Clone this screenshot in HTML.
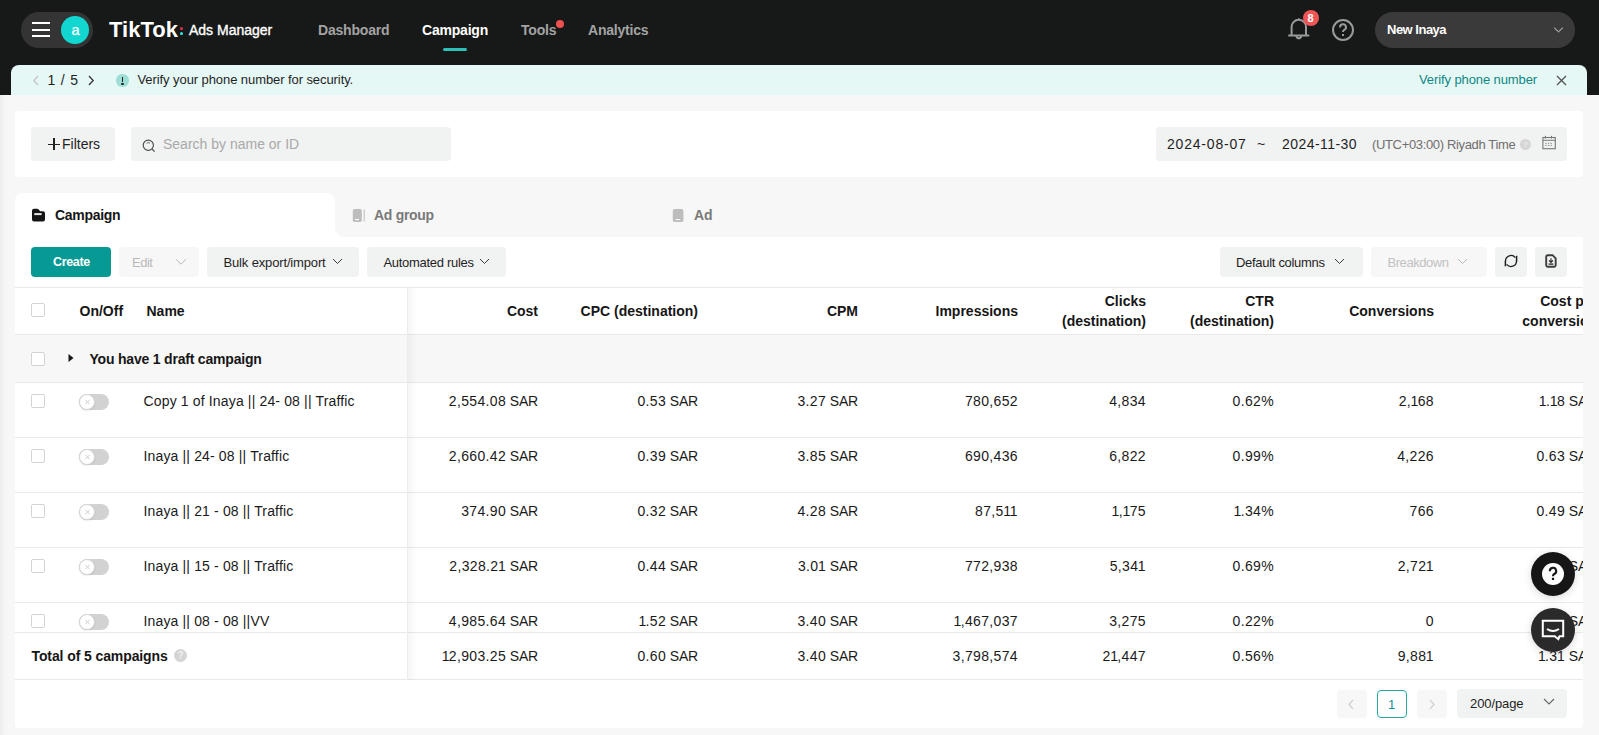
<!DOCTYPE html>
<html><head><meta charset="utf-8">
<style>
*{box-sizing:border-box;margin:0;padding:0}
html,body{width:1599px;height:735px;overflow:hidden}
body{position:relative;background:#f7f7f7;font-family:"Liberation Sans",sans-serif;color:#1f1f1f}
.a{position:absolute}
.t{position:absolute;white-space:nowrap;line-height:14px;font-size:14px}
.t13{font-size:13px;line-height:13px}
.b{font-weight:700}
.hdr{left:0;top:0;width:1599px;height:95px;background:#171918}
.navi{color:#a3a3a3;font-weight:700;letter-spacing:-0.2px}
.btn{position:absolute;background:#f1f2f2;border-radius:4px;height:30px;top:247px}
.hl{position:absolute;left:15px;width:1568px;height:1px;background:#e9e9e9}
.cb{position:absolute;left:31px;width:14px;height:14px;border:1px solid #d4d4d4;border-radius:2px;background:#fff}
.tg{position:absolute;left:79px;width:30px;height:16px;border-radius:8px;background:#d2d2d2}
.tg i{position:absolute;left:0;top:0;width:16px;height:16px;border-radius:50%;background:#fff;box-shadow:0 1px 2px rgba(0,0,0,.08);border:1px solid #d6d6d6}
.tg i:before,.tg i:after{content:"";position:absolute;left:6.5px;top:4px;width:1px;height:6px;background:#dcdcdc;transform:rotate(45deg)}
.tg i:after{transform:rotate(-45deg)}
.r{text-align:right}
i{font-style:normal}
.nm{letter-spacing:0.35px}
.sar{letter-spacing:-0.2px}
.n1{margin-left:-0.5px;letter-spacing:-0.6px}
.n1e{margin-left:-0.5px}
</style></head><body>

<!-- HEADER -->
<div class="a hdr"></div>
<div class="a" style="left:21px;top:12px;width:72px;height:36px;border-radius:18px;background:#343434"></div>
<div class="a" style="left:32px;top:22px;width:18px;height:2px;background:#fff"></div>
<div class="a" style="left:32px;top:29px;width:18px;height:2px;background:#fff"></div>
<div class="a" style="left:32px;top:35px;width:18px;height:2px;background:#fff"></div>
<div class="a" style="left:61px;top:16px;width:28px;height:28px;border-radius:50%;background:#12d6d0"></div>
<div class="t" style="left:71.5px;top:23px;color:#fff;font-size:14.5px;line-height:14.5px;-webkit-text-stroke:0.25px #fff">a</div>

<div class="t b" style="left:109px;top:19px;font-size:22px;line-height:22px;color:#fff">TikTok</div>
<div class="a" style="left:180px;top:27px;width:3.4px;height:3.4px;border-radius:50%;background:#f02c55"></div>
<div class="a" style="left:180px;top:32px;width:3.4px;height:3.4px;border-radius:50%;background:#25efe9"></div>
<div class="t" style="left:189px;top:23px;color:#fff;-webkit-text-stroke:0.35px #fff">Ads Manager</div>

<div class="t navi" style="left:318px;top:22.5px">Dashboard</div>
<div class="t navi" style="left:422px;top:22.5px;color:#fff">Campaign</div>
<div class="a" style="left:443px;top:48px;width:24px;height:3px;border-radius:2px;background:#2dc2b9"></div>
<div class="t navi" style="left:521px;top:22.5px">Tools</div>
<div class="a" style="left:556px;top:20px;width:8px;height:8px;border-radius:50%;background:#ee5050"></div>
<div class="t navi" style="left:588px;top:22.5px">Analytics</div>

<!-- bell -->
<svg class="a" style="left:1286px;top:16px" width="26" height="28" viewBox="0 0 26 28">
 <path d="M5.6 19 V11 A7.2 7.2 0 0 1 20 11 V19" fill="none" stroke="#9a9a9a" stroke-width="2"/>
 <line x1="3" y1="19.5" x2="22.5" y2="19.5" stroke="#9a9a9a" stroke-width="2" stroke-linecap="round"/>
 <path d="M10.3 20 A2.6 3.2 0 0 0 15.3 20" fill="none" stroke="#9a9a9a" stroke-width="2"/>
 <circle cx="12.8" cy="3.3" r="1" fill="#9a9a9a"/>
</svg>
<div class="a" style="left:1303px;top:10px;width:16px;height:16px;border-radius:50%;background:#ee5656"></div>
<div class="t b" style="left:1307.5px;top:11.5px;font-size:11px;line-height:13px;color:#fff">8</div>
<!-- help -->
<svg class="a" style="left:1331px;top:18px" width="24" height="24" viewBox="0 0 24 24">
 <circle cx="12" cy="12" r="10" fill="none" stroke="#9a9a9a" stroke-width="2"/>
 <path d="M9 9.5 A3 3 0 1 1 13 12 Q12 12.6 12 14" fill="none" stroke="#9a9a9a" stroke-width="2"/>
 <rect x="11" y="16" width="2" height="2" fill="#9a9a9a"/>
</svg>
<div class="a" style="left:1375px;top:12px;width:200px;height:36px;border-radius:18px;background:#3a3a3a"></div>
<div class="t t13 b" style="left:1387px;top:22.5px;color:#fff;letter-spacing:-0.5px">New Inaya</div>
<svg class="a" style="left:1553px;top:26px" width="11" height="8" viewBox="0 0 11 8"><path d="M1.2 1.8 L5.5 5.8 L9.8 1.8" fill="none" stroke="#eee" stroke-width="0.9"/></svg>

<!-- BANNER -->
<div class="a" style="left:11px;top:65px;width:1576px;height:30px;border-radius:8px 8px 0 0;background:#e6f8f6"></div>


<svg class="a" style="left:32px;top:75px" width="8" height="11" viewBox="0 0 8 11"><path d="M6 1 L1.8 5.5 L6 10" fill="none" stroke="#c4c4c4" stroke-width="1.3"/></svg>
<div class="t" style="left:47.5px;top:73px;color:#1f1f1f;letter-spacing:0.8px">1 / 5</div>
<svg class="a" style="left:87px;top:75px" width="8" height="11" viewBox="0 0 8 11"><path d="M2 1 L6.2 5.5 L2 10" fill="none" stroke="#333" stroke-width="1.3"/></svg>
<div class="a" style="left:116px;top:74px;width:12.5px;height:12.5px;border-radius:50%;background:#9fded7"></div>
<div class="a" style="left:121.5px;top:76.5px;width:1.6px;height:5.5px;background:#222"></div>
<div class="a" style="left:121px;top:82.5px;width:2.5px;height:2px;border-radius:1px;background:#222"></div>
<div class="t t13" style="left:137.5px;top:73px;color:#1f1f1f;letter-spacing:-0.08px">Verify your phone number for security.</div>
<div class="t t13" style="left:1419px;top:73px;color:#0e8785;letter-spacing:-0.1px">Verify phone number</div>
<svg class="a" style="left:1556px;top:74.5px" width="11" height="11" viewBox="0 0 11 11"><path d="M1 1 L10 10 M10 1 L1 10" stroke="#555" stroke-width="1.4"/></svg>

<div class="a" style="left:0;top:95px;width:6px;height:640px;background:linear-gradient(to right,#ededed,#f7f7f7)"></div>
<!-- FILTER CARD -->
<div class="a" style="left:15px;top:111px;width:1568px;height:66px;border-radius:4px;background:#fff"></div>
<div class="a" style="left:31px;top:127px;width:84px;height:34px;border-radius:4px;background:#f1f2f2"></div>
<div class="a" style="left:48px;top:143.5px;width:12px;height:1.2px;background:#222"></div>
<div class="a" style="left:53.4px;top:138px;width:1.2px;height:12px;background:#222"></div>
<div class="t" style="left:62px;top:136.5px;color:#1f1f1f">Filters</div>
<div class="a" style="left:131px;top:127px;width:320px;height:34px;border-radius:4px;background:#f1f2f2"></div>
<svg class="a" style="left:141px;top:138px" width="16" height="16" viewBox="0 0 16 16"><circle cx="7.3" cy="7.2" r="5.1" fill="none" stroke="#4a4a4a" stroke-width="1.15"/><path d="M10.9 10.9 L13.6 13.6" stroke="#4a4a4a" stroke-width="1.3"/><path d="M5.6 5.3 A2.4 2.4 0 0 1 9 5.3" fill="none" stroke="#555" stroke-width="0.9"/></svg>
<div class="t" style="left:163px;top:136.7px;color:#a9a9a9">Search by name or ID</div>

<div class="a" style="left:1156px;top:127px;width:411px;height:34px;border-radius:4px;background:#f1f2f2"></div>
<div class="t" style="left:1167px;top:136.6px;color:#1f1f1f;letter-spacing:0.8px">2024-08-07</div>
<div class="t" style="left:1257px;top:136.6px;color:#1f1f1f">~</div>
<div class="t" style="left:1282px;top:136.6px;color:#1f1f1f;letter-spacing:0.45px">2024-11-30</div>
<div class="t t13" style="left:1372px;top:137.5px;color:#6f6f6f;letter-spacing:-0.35px">(UTC+03:00) Riyadh Time</div>
<div class="a" style="left:1520px;top:139px;width:11px;height:11px;border-radius:50%;background:#d6d6d6"></div>
<div class="t b" style="left:1523px;top:140px;font-size:8px;line-height:9px;color:#eee">?</div>
<svg class="a" style="left:1541px;top:135px" width="15" height="15" viewBox="0 0 15 15"><rect x="1.9" y="2.5" width="12.4" height="11.2" fill="none" stroke="#777" stroke-width="1.1"/><line x1="1.9" y1="5.3" x2="14.3" y2="5.3" stroke="#777" stroke-width="1"/><line x1="4.4" y1="0.9" x2="4.4" y2="3.6" stroke="#777" stroke-width="1"/><line x1="10.5" y1="0.9" x2="10.5" y2="3.6" stroke="#777" stroke-width="1"/><g fill="#888"><rect x="4.2" y="7.8" width="1.4" height="1"/><rect x="6.9" y="7.8" width="1.4" height="1"/><rect x="9.5" y="7.8" width="1.4" height="1"/><rect x="4.2" y="9.9" width="1.4" height="1"/><rect x="6.9" y="9.9" width="1.4" height="1"/><rect x="9.5" y="9.9" width="1.4" height="1"/></g></svg>

<!-- TABS + MAIN CARD -->
<div class="a" style="left:15px;top:193px;width:320px;height:60px;border-radius:8px 8px 0 0;background:#fff"></div>
<div class="a" style="left:15px;top:237px;width:1568px;height:491px;border-radius:0 0 4px 4px;background:#fff"></div>
<div class="a" style="left:330px;top:220px;width:20px;height:20px;background:#fff"></div>
<div class="a" style="left:335px;top:193px;width:1248px;height:44px;background:#f7f7f7;border-bottom-left-radius:9px"></div>
<svg class="a" style="left:31px;top:208px" width="15" height="15" viewBox="0 0 15 15"><path d="M1 2.8 Q1 0.8 3 0.8 H6.2 Q7 0.8 7.6 1.5 L9.2 3.3 H12 Q14 3.3 14 5.3 V11.6 Q14 13.6 12 13.6 H3 Q1 13.6 1 11.6 Z" fill="#161616"/><rect x="3.3" y="5.1" width="7.3" height="2" fill="#e8e8e8"/></svg>
<div class="t b" style="left:55px;top:208px;color:#161616;letter-spacing:-0.3px">Campaign</div>
<svg class="a" style="left:352px;top:208px" width="14" height="15" viewBox="0 0 14 15"><rect x="0.8" y="1" width="9" height="13" rx="1.8" fill="#bdbdbd"/><rect x="3" y="11" width="4" height="1.1" fill="#fff"/><line x1="12.2" y1="1.5" x2="12.2" y2="13.5" stroke="#bdbdbd" stroke-width="1"/></svg>
<div class="t b" style="left:374px;top:208px;color:#7a7a7a;letter-spacing:-0.3px">Ad group</div>
<svg class="a" style="left:672px;top:208px" width="13" height="15" viewBox="0 0 13 15"><rect x="0.8" y="1" width="10.6" height="13" rx="1.8" fill="#bdbdbd"/><rect x="3.8" y="11" width="4.4" height="1.1" fill="#fff"/></svg>
<div class="t b" style="left:694px;top:208px;color:#7a7a7a">Ad</div>

<!-- TOOLBAR -->
<div class="btn" style="left:31px;width:80px;background:#079a94"></div>
<div class="t b" style="left:53px;top:255.5px;font-size:12.5px;line-height:12.5px;color:#fff;letter-spacing:-0.35px">Create</div>
<div class="btn" style="left:119px;width:80px;background:#f7f7f7"></div>
<div class="t t13" style="left:132px;top:255.5px;color:#b9b9b9;letter-spacing:-0.5px">Edit</div>
<svg class="a" style="left:175px;top:258px" width="12" height="8" viewBox="0 0 12 8"><path d="M1 1.2 L6 6.2 L11 1.2" fill="none" stroke="#b8b8b8" stroke-width="1"/></svg>
<div class="btn" style="left:207px;width:152px"></div>
<div class="t t13" style="left:223.5px;top:255.5px;color:#1f1f1f;letter-spacing:-0.15px">Bulk export/import</div>
<svg class="a" style="left:332px;top:258px" width="11" height="7" viewBox="0 0 11 7"><path d="M1 1 L5.5 5.5 L10 1" fill="none" stroke="#3a3a3a" stroke-width="1"/></svg>
<div class="btn" style="left:367px;width:139px"></div>
<div class="t t13" style="left:383.5px;top:255.5px;color:#1f1f1f;letter-spacing:-0.3px">Automated rules</div>
<svg class="a" style="left:479px;top:258px" width="11" height="7" viewBox="0 0 11 7"><path d="M1 1 L5.5 5.5 L10 1" fill="none" stroke="#3a3a3a" stroke-width="1"/></svg>

<div class="btn" style="left:1220px;width:143px"></div>
<div class="t t13" style="left:1236px;top:255.5px;color:#1f1f1f;letter-spacing:-0.3px">Default columns</div>
<svg class="a" style="left:1334px;top:258px" width="11" height="7" viewBox="0 0 11 7"><path d="M1 1 L5.5 5.5 L10 1" fill="none" stroke="#3a3a3a" stroke-width="1"/></svg>
<div class="btn" style="left:1371px;width:116px;background:#f7f7f7"></div>
<div class="t t13" style="left:1387.5px;top:255.5px;color:#c2c2c2;letter-spacing:-0.45px">Breakdown</div>
<svg class="a" style="left:1457px;top:258px" width="11" height="7" viewBox="0 0 11 7"><path d="M1 1 L5.5 5.5 L10 1" fill="none" stroke="#b8b8b8" stroke-width="1"/></svg>
<div class="btn" style="left:1495px;width:32px"></div>
<svg class="a" style="left:1504px;top:254px" width="14" height="14" viewBox="0 0 14 14"><path d="M1.50 7.00 A5.5 5.5 0 0 1 11.33 3.61" fill="none" stroke="#1f1f1f" stroke-width="1.3"/><path d="M12.50 7.00 A5.5 5.5 0 0 1 2.67 10.39" fill="none" stroke="#1f1f1f" stroke-width="1.3"/><path d="M12.6 1.8 V7.6" stroke="#1f1f1f" stroke-width="1.5"/><path d="M1.4 6.8 V12.3" stroke="#1f1f1f" stroke-width="1.5"/></svg>
<div class="btn" style="left:1535px;width:32px"></div>
<svg class="a" style="left:1544px;top:253px" width="14" height="16" viewBox="0 0 14 16"><path d="M2.2 3.7 Q2.2 2.2 3.7 2.2 H8.6 L11.7 5.3 V12.2 Q11.7 13.7 10.2 13.7 H3.7 Q2.2 13.7 2.2 12.2 Z" fill="none" stroke="#3d3d3d" stroke-width="1.9"/><path d="M7 5.2 V9" stroke="#222" stroke-width="1.1"/><path d="M5 7.4 L7 9.3 L9 7.4" fill="none" stroke="#222" stroke-width="1.2"/><path d="M4.6 11.1 H9.4" stroke="#222" stroke-width="1.3"/></svg>

<div class="hl" style="top:287px"></div>


<!-- TABLE -->
<div class="a" style="left:15px;top:288px;width:1568px;height:392px;overflow:hidden">
<div class="a" style="left:-15px;top:-288px;width:1599px;height:735px">
<div class="a" style="left:15px;top:335px;width:1568px;height:47px;background:#f7f7f7"></div>
<div class="hl" style="top:334px"></div>
<div class="hl" style="top:382px"></div>
<div class="hl" style="top:437px"></div>
<div class="hl" style="top:492px"></div>
<div class="hl" style="top:547px"></div>
<div class="hl" style="top:602px"></div>
<div class="cb" style="top:303px"></div>
<div class="t b" style="left:79.5px;top:304px;color:#161616">On/Off</div>
<div class="t b" style="left:146.5px;top:304px;color:#161616">Name</div>
<div class="t r" style="right:1061px;top:304px;font-weight:700;color:#161616;">Cost</div>
<div class="t r" style="right:901px;top:304px;font-weight:700;color:#161616;">CPC (destination)</div>
<div class="t r" style="right:741px;top:304px;font-weight:700;color:#161616;">CPM</div>
<div class="t r" style="right:581px;top:304px;font-weight:700;color:#161616;">Impressions</div>
<div class="t r b" style="right:453px;top:291px;line-height:20px;color:#161616;">Clicks<br>(destination)</div>
<div class="t r b" style="right:325px;top:291px;line-height:20px;color:#161616;">CTR<br>(destination)</div>
<div class="t r" style="right:165px;top:304px;font-weight:700;color:#161616;">Conversions</div>
<div class="t r b" style="right:2px;top:291px;line-height:20px;color:#161616;">Cost per<br>conversion</div>
<div class="cb" style="top:352px"></div>
<svg class="a" style="left:67px;top:353px" width="8" height="10" viewBox="0 0 8 10"><path d="M1.5 1 L6.5 5 L1.5 9 Z" fill="#161616"/></svg>
<div class="t b" style="left:89.5px;top:352px;color:#161616;letter-spacing:-0.2px">You have 1 draft campaign</div>
<div class="cb" style="top:394px"></div>
<div class="tg" style="top:394px"><i></i></div>
<div class="t" style="left:143.5px;top:393.5px;color:#1a1a1a;letter-spacing:0.15px">Copy 1 of Inaya || 24- 08 || Traffic</div>
<div class="t r" style="right:1061px;top:393.5px;color:#1a1a1a;"><span class="nm">2,554.08<i class="sar"> SAR</i></span></div>
<div class="t r" style="right:901px;top:393.5px;color:#1a1a1a;"><span class="nm">0.53<i class="sar"> SAR</i></span></div>
<div class="t r" style="right:741px;top:393.5px;color:#1a1a1a;"><span class="nm">3.27<i class="sar"> SAR</i></span></div>
<div class="t r" style="right:581px;top:393.5px;color:#1a1a1a;"><span class="nm">780,652</span></div>
<div class="t r" style="right:453px;top:393.5px;color:#1a1a1a;"><span class="nm">4,834</span></div>
<div class="t r" style="right:325px;top:393.5px;color:#1a1a1a;"><span class="nm">0.62%</span></div>
<div class="t r" style="right:165px;top:393.5px;color:#1a1a1a;"><span class="nm">2,<i class="n1">1</i>68</span></div>
<div class="t r" style="right:2px;top:393.5px;color:#1a1a1a;"><span class="nm"><i class="n1">1</i>.<i class="n1">1</i>8<i class="sar"> SAR</i></span></div>
<div class="cb" style="top:449px"></div>
<div class="tg" style="top:449px"><i></i></div>
<div class="t" style="left:143.5px;top:448.5px;color:#1a1a1a;letter-spacing:0.15px">Inaya || 24- 08 || Traffic</div>
<div class="t r" style="right:1061px;top:448.5px;color:#1a1a1a;"><span class="nm">2,660.42<i class="sar"> SAR</i></span></div>
<div class="t r" style="right:901px;top:448.5px;color:#1a1a1a;"><span class="nm">0.39<i class="sar"> SAR</i></span></div>
<div class="t r" style="right:741px;top:448.5px;color:#1a1a1a;"><span class="nm">3.85<i class="sar"> SAR</i></span></div>
<div class="t r" style="right:581px;top:448.5px;color:#1a1a1a;"><span class="nm">690,436</span></div>
<div class="t r" style="right:453px;top:448.5px;color:#1a1a1a;"><span class="nm">6,822</span></div>
<div class="t r" style="right:325px;top:448.5px;color:#1a1a1a;"><span class="nm">0.99%</span></div>
<div class="t r" style="right:165px;top:448.5px;color:#1a1a1a;"><span class="nm">4,226</span></div>
<div class="t r" style="right:2px;top:448.5px;color:#1a1a1a;"><span class="nm">0.63<i class="sar"> SAR</i></span></div>
<div class="cb" style="top:504px"></div>
<div class="tg" style="top:504px"><i></i></div>
<div class="t" style="left:143.5px;top:503.5px;color:#1a1a1a;letter-spacing:0.15px">Inaya || 21 - 08 || Traffic</div>
<div class="t r" style="right:1061px;top:503.5px;color:#1a1a1a;"><span class="nm">374.90<i class="sar"> SAR</i></span></div>
<div class="t r" style="right:901px;top:503.5px;color:#1a1a1a;"><span class="nm">0.32<i class="sar"> SAR</i></span></div>
<div class="t r" style="right:741px;top:503.5px;color:#1a1a1a;"><span class="nm">4.28<i class="sar"> SAR</i></span></div>
<div class="t r" style="right:581px;top:503.5px;color:#1a1a1a;"><span class="nm">87,5<i class="n1">1</i><i class="n1e">1</i></span></div>
<div class="t r" style="right:453px;top:503.5px;color:#1a1a1a;"><span class="nm"><i class="n1">1</i>,<i class="n1">1</i>75</span></div>
<div class="t r" style="right:325px;top:503.5px;color:#1a1a1a;"><span class="nm"><i class="n1">1</i>.34%</span></div>
<div class="t r" style="right:165px;top:503.5px;color:#1a1a1a;"><span class="nm">766</span></div>
<div class="t r" style="right:2px;top:503.5px;color:#1a1a1a;"><span class="nm">0.49<i class="sar"> SAR</i></span></div>
<div class="cb" style="top:559px"></div>
<div class="tg" style="top:559px"><i></i></div>
<div class="t" style="left:143.5px;top:558.5px;color:#1a1a1a;letter-spacing:0.15px">Inaya || 15 - 08 || Traffic</div>
<div class="t r" style="right:1061px;top:558.5px;color:#1a1a1a;"><span class="nm">2,328.2<i class="n1e">1</i><i class="sar"> SAR</i></span></div>
<div class="t r" style="right:901px;top:558.5px;color:#1a1a1a;"><span class="nm">0.44<i class="sar"> SAR</i></span></div>
<div class="t r" style="right:741px;top:558.5px;color:#1a1a1a;"><span class="nm">3.0<i class="n1e">1</i><i class="sar"> SAR</i></span></div>
<div class="t r" style="right:581px;top:558.5px;color:#1a1a1a;"><span class="nm">772,938</span></div>
<div class="t r" style="right:453px;top:558.5px;color:#1a1a1a;"><span class="nm">5,34<i class="n1e">1</i></span></div>
<div class="t r" style="right:325px;top:558.5px;color:#1a1a1a;"><span class="nm">0.69%</span></div>
<div class="t r" style="right:165px;top:558.5px;color:#1a1a1a;"><span class="nm">2,72<i class="n1e">1</i></span></div>
<div class="t r" style="right:2px;top:558.5px;color:#1a1a1a;"><span class="nm">0.86<i class="sar"> SAR</i></span></div>
<div class="cb" style="top:614px"></div>
<div class="tg" style="top:614px"><i></i></div>
<div class="t" style="left:143.5px;top:613.5px;color:#1a1a1a;letter-spacing:0.15px">Inaya || 08 - 08 ||VV</div>
<div class="t r" style="right:1061px;top:613.5px;color:#1a1a1a;"><span class="nm">4,985.64<i class="sar"> SAR</i></span></div>
<div class="t r" style="right:901px;top:613.5px;color:#1a1a1a;"><span class="nm"><i class="n1">1</i>.52<i class="sar"> SAR</i></span></div>
<div class="t r" style="right:741px;top:613.5px;color:#1a1a1a;"><span class="nm">3.40<i class="sar"> SAR</i></span></div>
<div class="t r" style="right:581px;top:613.5px;color:#1a1a1a;"><span class="nm"><i class="n1">1</i>,467,037</span></div>
<div class="t r" style="right:453px;top:613.5px;color:#1a1a1a;"><span class="nm">3,275</span></div>
<div class="t r" style="right:325px;top:613.5px;color:#1a1a1a;"><span class="nm">0.22%</span></div>
<div class="t r" style="right:165px;top:613.5px;color:#1a1a1a;"><span class="nm">0</span></div>
<div class="t r" style="right:2px;top:613.5px;color:#1a1a1a;"><span class="nm">0.00<i class="sar"> SAR</i></span></div>
<div class="a" style="left:15px;top:632px;width:1568px;height:47px;background:#fff"></div>
<div class="hl" style="top:632px"></div>
<div class="hl" style="top:679px"></div>
<div class="t b" style="left:31.5px;top:649px;color:#161616;letter-spacing:-0.1px">Total of 5 campaigns</div>
<div class="a" style="left:173.5px;top:648.5px;width:13.5px;height:13.5px;border-radius:50%;background:#d4d4d4"></div>
<div class="t b" style="left:177.5px;top:650px;font-size:10px;line-height:11px;color:#eee">?</div>
<div class="t r" style="right:1061px;top:649px;color:#1a1a1a;"><span class="nm"><i class="n1">1</i>2,903.25<i class="sar"> SAR</i></span></div>
<div class="t r" style="right:901px;top:649px;color:#1a1a1a;"><span class="nm">0.60<i class="sar"> SAR</i></span></div>
<div class="t r" style="right:741px;top:649px;color:#1a1a1a;"><span class="nm">3.40<i class="sar"> SAR</i></span></div>
<div class="t r" style="right:581px;top:649px;color:#1a1a1a;"><span class="nm">3,798,574</span></div>
<div class="t r" style="right:453px;top:649px;color:#1a1a1a;"><span class="nm">2<i class="n1">1</i>,447</span></div>
<div class="t r" style="right:325px;top:649px;color:#1a1a1a;"><span class="nm">0.56%</span></div>
<div class="t r" style="right:165px;top:649px;color:#1a1a1a;"><span class="nm">9,88<i class="n1e">1</i></span></div>
<div class="t r" style="right:2px;top:649px;color:#1a1a1a;"><span class="nm"><i class="n1">1</i>.3<i class="n1e">1</i><i class="sar"> SAR</i></span></div>
<div class="a" style="left:407px;top:288px;width:1px;height:392px;background:#ececec"></div>
<div class="a" style="left:408px;top:288px;width:10px;height:392px;background:linear-gradient(to right,rgba(0,0,0,.035),rgba(0,0,0,0))"></div>
</div></div>

<div class="a" style="left:1337px;top:690px;width:30px;height:28px;border-radius:4px;background:#f7f7f7"></div>
<svg class="a" style="left:1347px;top:699px" width="8" height="11" viewBox="0 0 8 11"><path d="M6 1 L2 5.5 L6 10" fill="none" stroke="#cfcfcf" stroke-width="1.2"/></svg>
<div class="a" style="left:1377px;top:690px;width:30px;height:28px;border-radius:4px;border:1.2px solid #2aa7a1;background:#fff"></div>
<div class="t t13" style="left:1388px;top:698px;color:#14928d">1</div>
<div class="a" style="left:1417px;top:690px;width:30px;height:28px;border-radius:4px;background:#f7f7f7"></div>
<svg class="a" style="left:1428px;top:699px" width="8" height="11" viewBox="0 0 8 11"><path d="M2 1 L6 5.5 L2 10" fill="none" stroke="#cfcfcf" stroke-width="1.2"/></svg>
<div class="a" style="left:1457px;top:689px;width:110px;height:29px;border-radius:4px;background:#f1f2f2"></div>
<div class="t t13" style="left:1470px;top:697px;color:#1f1f1f;letter-spacing:-0.1px">200/page</div>
<svg class="a" style="left:1543px;top:698px" width="12" height="8" viewBox="0 0 12 8"><path d="M1 1 L6 6 L11 1" fill="none" stroke="#666" stroke-width="1.1"/></svg>

<!-- FLOATING -->
<div class="a" style="left:1531px;top:552px;width:44px;height:44px;border-radius:50%;background:#161616;box-shadow:0 2px 8px rgba(0,0,0,.15)"></div>
<div class="a" style="left:1542px;top:563px;width:22px;height:22px;border-radius:50%;background:#fff"></div>
<svg class="a" style="left:1546px;top:566px" width="14" height="16" viewBox="0 0 14 16"><path d="M3.8 5.2 A3.2 3.2 0 1 1 8.2 8 Q7 8.6 7 10.2" fill="none" stroke="#161616" stroke-width="2.1"/><rect x="5.9" y="11.8" width="2.2" height="2.2" fill="#161616"/></svg>
<div class="a" style="left:1531px;top:608px;width:44px;height:44px;border-radius:50%;background:#2a2a2a;box-shadow:0 2px 8px rgba(0,0,0,.15)"></div>
<svg class="a" style="left:1540px;top:618px" width="26" height="24" viewBox="0 0 26 24"><path d="M2.8 2.8 H23.2 V18.3 H19.5 L18.3 21.2 L14.8 18.3 H2.8 Z" fill="none" stroke="#fff" stroke-width="2" stroke-linejoin="miter"/><path d="M7 11 Q13 15 19 11" fill="none" stroke="#fff" stroke-width="2"/></svg>

</body></html>
